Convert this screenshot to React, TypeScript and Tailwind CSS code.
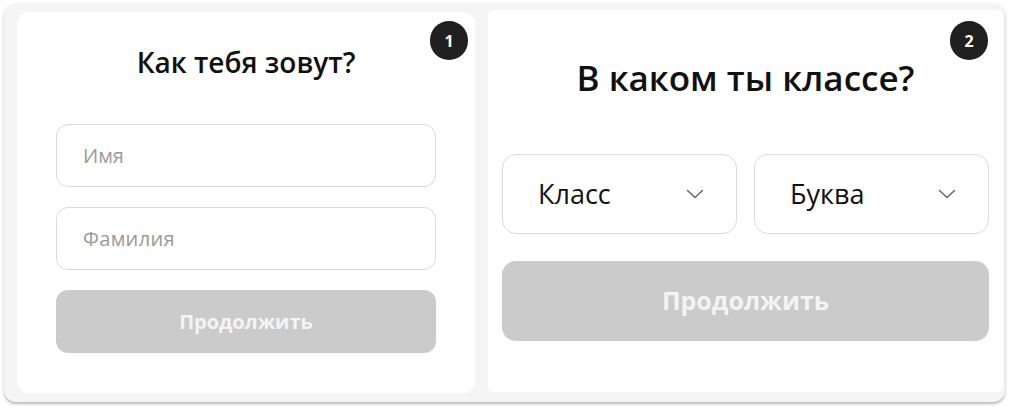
function Badge({ n, className }: { n: number; className: string }) {
  return (
    <div
      className={`absolute w-[38px] h-[39px] rounded-full bg-[#202020] text-white text-[16px] font-bold flex items-center justify-center ${className}`}
    >
      {n}
    </div>
  )
}

function Chevron() {
  return (
    <svg width="18" height="10" viewBox="0 0 18 10" fill="none" className="text-[#666]">
      <path d="M1.5 1.5 9 8.5l7.5-7" stroke="currentColor" strokeWidth="1.5" strokeLinecap="round" strokeLinejoin="round" />
    </svg>
  )
}

function NameCard() {
  return (
    <div className="relative w-[458px] h-[381px] mt-[9px] ml-[13px] bg-white rounded-[12px] px-[39px] pt-[33px]">
      <Badge n={1} className="top-[9px] right-[7px]" />
      <h2 className="text-center text-[28px] leading-[34px] font-semibold text-[#111]">Как тебя зовут?</h2>

      <div className="mt-[45px] flex flex-col gap-[20px]">
        <input
          placeholder="Имя"
          className="h-[63px] w-full rounded-[12px] border border-[#dadada] pl-[26px] text-[20px] text-[#333] placeholder:text-[#9a9a9a] outline-none"
        />
        <input
          placeholder="Фамилия"
          className="h-[63px] w-full rounded-[12px] border border-[#dadada] pl-[26px] text-[20px] tracking-[0.3px] text-[#333] placeholder:text-[#9a9a9a] outline-none"
        />
        <button className="h-[63px] w-full rounded-[12px] bg-[#cbcbcb] text-[#f4f4f4] text-[20px] font-bold">
          Продолжить
        </button>
      </div>
    </div>
  )
}

function Select({ label }: { label: string }) {
  return (
    <div className="flex-1 h-[80px] rounded-[14px] border border-[#dcdcdc] flex items-center justify-between pl-[35px] pr-[32px]">
      <span className="text-[27px] text-[#111]">{label}</span>
      <Chevron />
    </div>
  )
}

function ClassCard() {
  return (
    <div className="relative w-[515px] h-[382px] mt-[7px] ml-[13px] bg-white rounded-[6px] px-[14px] pt-[47px]">
      <Badge n={2} className="top-[11px] right-[15px]" />
      <h2 className="text-center text-[35px] leading-[42px] font-semibold text-[#111]">В каком ты классе?</h2>

      <div className="mt-[55px] flex gap-[17px]">
        <Select label="Класс" />
        <Select label="Буква" />
      </div>
      <button className="mt-[27px] h-[80px] w-full rounded-[14px] bg-[#cbcbcb] text-[#f4f4f4] text-[25px] font-bold">
        Продолжить
      </button>
    </div>
  )
}

export default function App() {
  return (
    <div className="w-[1010px] h-[413px] bg-white pt-[3px] pl-[4px] font-['Open_Sans',sans-serif]">
      <div className="flex w-[1001px] h-[399px] bg-[#f5f5f5] rounded-[12px] shadow-[0_2px_3px_rgba(0,0,0,0.28)]">
        <NameCard />
        <ClassCard />
      </div>
    </div>
  )
}
